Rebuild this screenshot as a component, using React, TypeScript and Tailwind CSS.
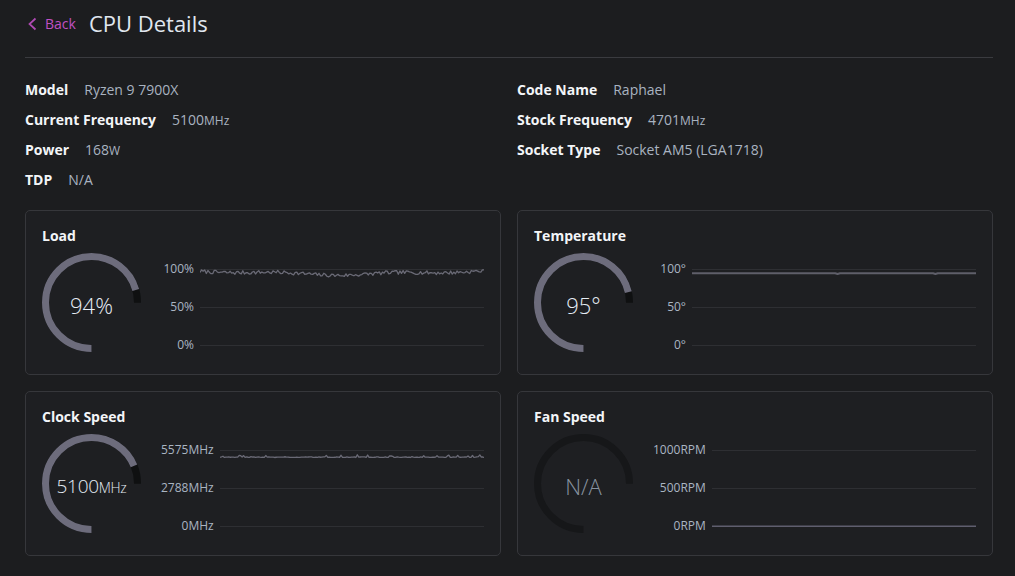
import React from "react";

const FONT = '"Open Sans", "Noto Sans", sans-serif';

function rng(seed: number) {
  let s = seed;
  return () => {
    s = (s * 1664525 + 1013904223) % 4294967296;
    return s / 4294967296;
  };
}

// fake history samples, values as fraction of the axis max
function makeLoad(): number[] {
  const r = rng(7);
  const out: number[] = [];
  for (let i = 0; i < 180; i++) {
    const base = 0.955 + 0.02 * Math.cos(i / 28) - 0.012 * Math.sin(i / 11);
    out.push(Math.min(0.995, base + (r() - 0.5) * 0.05));
  }
  return out;
}

function makeClock(): number[] {
  const r = rng(19);
  const out: number[] = [];
  for (let i = 0; i < 180; i++) {
    let v = 0.912 + (r() - 0.5) * 0.008;
    if (r() > 0.82) v += r() * 0.03;
    out.push(v);
  }
  return out;
}

function makeTemp(): number[] {
  const out: number[] = [];
  for (let i = 0; i < 120; i++) {
    out.push(i === 61 || i === 102 ? 0.94 : 0.95);
  }
  return out;
}

const FAN = Array.from({ length: 60 }, () => 0);

interface GaugeProps {
  pct: number | null;
  children: React.ReactNode;
}

function Gauge({ pct, children }: GaugeProps) {
  const r = 46;
  const c = 2 * Math.PI * r;
  const arc = c * 0.75;
  return (
    <div className="relative h-[99px] w-[99px] shrink-0">
      <svg width="99" height="99" viewBox="0 0 99 99" className="rotate-90">
        <circle
          cx="49.5"
          cy="49.5"
          r={r}
          fill="none"
          stroke={pct === null ? "#161719" : "#0f1011"}
          strokeWidth="7"
          strokeDasharray={`${arc} ${c}`}
        />
        {pct !== null && (
          <circle
            cx="49.5"
            cy="49.5"
            r={r}
            fill="none"
            stroke="#6d6c7c"
            strokeWidth="7"
            strokeDasharray={`${arc * pct} ${c}`}
          />
        )}
      </svg>
      <div className="absolute inset-0 flex items-center justify-center pt-[5px]">{children}</div>
    </div>
  );
}

interface ChartProps {
  labels: string[];
  values: number[];
  stroke: string;
  width: number;
}

function Chart({ labels, values, stroke, width }: ChartProps) {
  const pts = values
    .map((v, i) => `${((i / (values.length - 1)) * 1000).toFixed(1)},${(0.5 + (1 - v) * 76).toFixed(2)}`)
    .join(" ");
  return (
    <div className="ml-5 flex flex-1 items-end">
      <div className="flex h-[90px] min-w-[33px] flex-col justify-between text-right text-xs leading-[14px] text-[#aab5c2]">
        {labels.map((l) => (
          <span key={l}>{l}</span>
        ))}
      </div>
      <div className="ml-[6px] flex-1 pb-[6px]">
        <svg className="block h-[77px] w-full" viewBox="0 0 1000 77" preserveAspectRatio="none">
          {[0.5, 38.5, 76.5].map((y) => (
            <line key={y} x1="0" x2="1000" y1={y} y2={y} stroke="#2e2f33" strokeWidth="1" vectorEffect="non-scaling-stroke" />
          ))}
          <polyline
            points={pts}
            fill="none"
            stroke={stroke}
            strokeWidth={width}
            strokeLinejoin="round"
            vectorEffect="non-scaling-stroke"
          />
        </svg>
      </div>
    </div>
  );
}

interface CardProps {
  title: string;
  children: React.ReactNode;
}

function Card({ title, children }: CardProps) {
  return (
    <div className="rounded-[5px] border border-[#36373b] bg-[#1e1f22] px-4 pt-[15px] pb-[22px]">
      <div className="text-sm font-bold leading-5 text-[#f3f5f8]">{title}</div>
      <div className="mt-[7px] flex items-end">{children}</div>
    </div>
  );
}

function InfoRow({ label, children }: { label: string; children: React.ReactNode }) {
  return (
    <div className="flex items-baseline text-sm leading-[30px]">
      <span className="font-bold text-[#f3f5f8]">{label}</span>
      <span className="ml-4 text-[#a9b3c0]">{children}</span>
    </div>
  );
}

const Unit = ({ children }: { children: React.ReactNode }) => <span className="text-xs">{children}</span>;

export default function App() {
  return (
    <div className="min-h-[576px] bg-[#1c1d1f] pt-[7px] pr-[22px] pl-[25px]" style={{ fontFamily: FONT }}>
      {/* Header */}
      <div className="flex h-8 items-center">
        <svg width="12" height="16" viewBox="0 0 12 16" className="ml-[1px] mt-[2px]">
          <path d="M9.5 2.5 L3.5 8 L9.5 13.5" fill="none" stroke="#b04ab4" strokeWidth="1.7" />
        </svg>
        <span className="ml-[7px] mt-[2px] text-sm text-[#c150c4]">Back</span>
        <h1 className="ml-[13px] text-[22px] font-normal text-[#e0e7ef]">CPU Details</h1>
      </div>
      <div className="mt-[18px] h-px bg-[#3a3b3f]" />

      {/* Info */}
      <div className="mt-[17px] grid grid-cols-2 gap-x-4">
        <div className="flex flex-col">
          <InfoRow label="Model">Ryzen 9 7900X</InfoRow>
          <InfoRow label="Current Frequency">
            5100<Unit>MHz</Unit>
          </InfoRow>
          <InfoRow label="Power">
            168<Unit>W</Unit>
          </InfoRow>
          <InfoRow label="TDP">N/A</InfoRow>
        </div>
        <div className="flex flex-col">
          <InfoRow label="Code Name">Raphael</InfoRow>
          <InfoRow label="Stock Frequency">
            4701<Unit>MHz</Unit>
          </InfoRow>
          <InfoRow label="Socket Type">Socket AM5 (LGA1718)</InfoRow>
        </div>
      </div>

      {/* Cards */}
      <div className="mt-[15px] grid grid-cols-2 gap-4">
        <Card title="Load">
          <Gauge pct={0.94}>
            <span className="text-[22px] font-light text-[#e6edf5]">94%</span>
          </Gauge>
          <Chart labels={["100%", "50%", "0%"]} values={makeLoad()} stroke="#6a6a76" width={1.3} />
        </Card>
        <Card title="Temperature">
          <Gauge pct={0.95}>
            <span className="text-[22px] font-light text-[#e6edf5]">95°</span>
          </Gauge>
          <Chart labels={["100°", "50°", "0°"]} values={makeTemp()} stroke="#5f5f6a" width={2} />
        </Card>
        <Card title="Clock Speed">
          <Gauge pct={0.915}>
            <span className="text-[19px] font-light tracking-[-0.3px] text-[#e6edf5]">
              5100<span className="text-[14px]">MHz</span>
            </span>
          </Gauge>
          <Chart labels={["5575MHz", "2788MHz", "0MHz"]} values={makeClock()} stroke="#6a6a76" width={1.3} />
        </Card>
        <Card title="Fan Speed">
          <Gauge pct={null}>
            <span className="text-[22px] font-light text-[#8893a0]">N/A</span>
          </Gauge>
          <Chart labels={["1000RPM", "500RPM", "0RPM"]} values={FAN} stroke="#5f5e6e" width={2} />
        </Card>
      </div>
    </div>
  );
}
